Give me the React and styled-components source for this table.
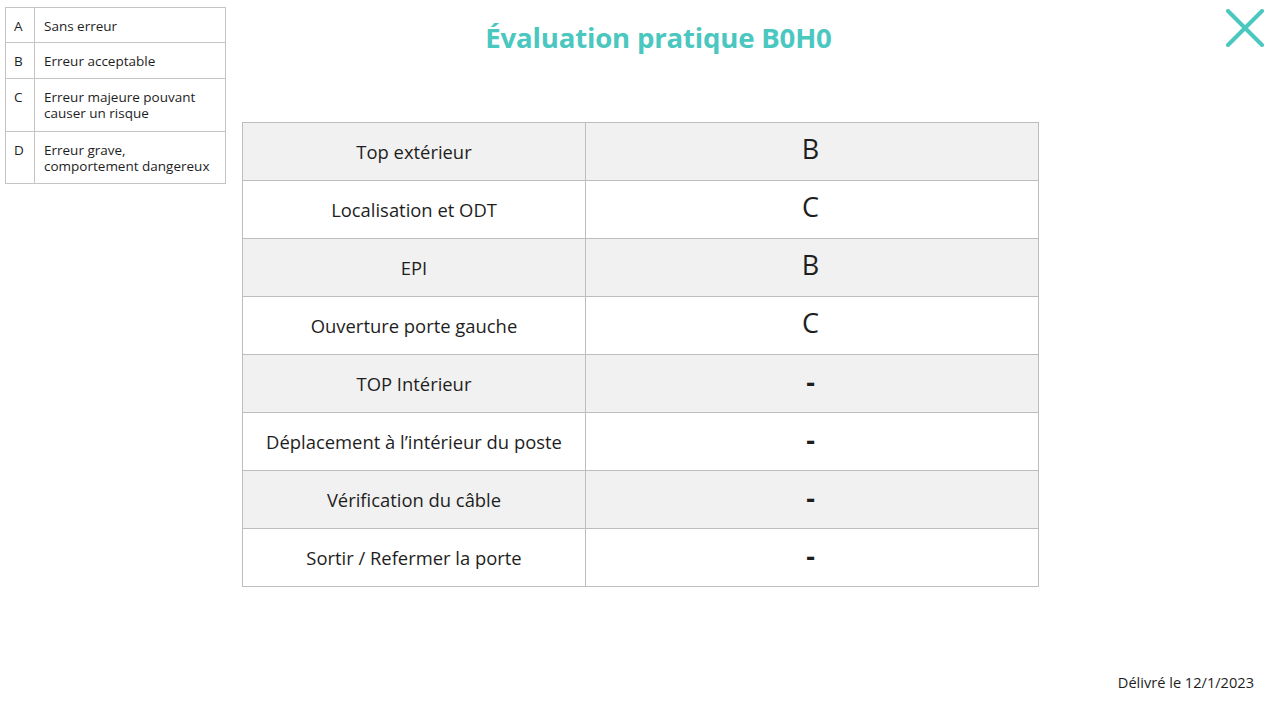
import React from "react";
import styled, { createGlobalStyle } from "styled-components";

const Global = createGlobalStyle`
  html, body { margin: 0; padding: 0; background: #fff; }
  body { font-family: "Open Sans", "Noto Sans", sans-serif; color: #1e1e1e; }
`;

const Page = styled.div`
  width: 1280px;
  height: 716px;
  display: grid;
  grid-template-columns: 242px 796px 1fr;
  grid-template-rows: 1fr auto;
  box-sizing: border-box;
`;

const LegendCol = styled.div`
  padding: 7px 0 0 5px;
`;

const Legend = styled.table`
  border-collapse: collapse;
  width: 221px;
  font-size: 13.5px;
  line-height: 16px;
  td {
    border: 1px solid #c4c4c4;
    vertical-align: top;
    padding: 10px 6px 0 9px;
  }
  td:first-child { width: 12px; padding-left: 8px; padding-right: 8px; }
`;

const LegendRow = styled.tr`
  height: ${(p) => p.$h}px;
`;

const Main = styled.main`
  display: flex;
  flex-direction: column;
  align-items: stretch;
`;

const Title = styled.h1`
  margin: 18px 0 0 37px;
  text-align: center;
  font-size: 27.6px;
  line-height: 38px;
  font-weight: 700;
  color: #4ac7bf;
  letter-spacing: -0.2px;
`;

const Grid = styled.table`
  margin-top: 66px;
  border-collapse: collapse;
  width: 797px;
  td {
    border: 1px solid #bdbdbd;
    text-align: center;
  }
`;

const Row = styled.tr`
  height: 58px;
  background: ${(p) => (p.$alt ? "#f1f1f1" : "#fff")};
`;

const Label = styled.td`
  width: 340px;
  font-size: 18.4px;
  padding-bottom: 2px;
`;

const Grade = styled.td`
  font-size: 27px;
  line-height: 30px;
  padding-bottom: ${(p) => (p.$dash ? 4 : 6)}px;
  padding-right: 4px;
  font-weight: ${(p) => (p.$dash ? 700 : 400)};
`;

const CloseCol = styled.div`
  display: flex;
  justify-content: flex-end;
  align-items: flex-start;
  padding: 9px 16px 0 0;
`;

const CloseBtn = styled.button`
  background: none;
  border: none;
  padding: 0;
  width: 38px;
  height: 38px;
  cursor: pointer;
  display: block;
`;

const Footer = styled.footer`
  grid-column: 1 / -1;
  text-align: right;
  padding: 0 26px 24px 0;
  font-size: 14.6px;
  line-height: 20px;
`;

const legend = [
  ["A", "Sans erreur", 35],
  ["B", "Erreur acceptable", 36],
  ["C", "Erreur majeure pouvant causer un risque", 53],
  ["D", "Erreur grave, comportement dangereux", 52],
];

const rows = [
  ["Top extérieur", "B"],
  ["Localisation et ODT", "C"],
  ["EPI", "B"],
  ["Ouverture porte gauche", "C"],
  ["TOP Intérieur", "-"],
  ["Déplacement à l’intérieur du poste", "-"],
  ["Vérification du câble", "-"],
  ["Sortir / Refermer la porte", "-"],
];

export default function App() {
  return (
    <>
      <Global />
      <Page>
        <LegendCol>
          <Legend>
            <tbody>
              {legend.map(([k, v, h]) => (
                <LegendRow key={k} $h={h}>
                  <td>{k}</td>
                  <td>{v}</td>
                </LegendRow>
              ))}
            </tbody>
          </Legend>
        </LegendCol>
        <Main>
          <Title>Évaluation pratique B0H0</Title>
          <Grid>
            <tbody>
              {rows.map(([l, g], i) => (
                <Row key={l} $alt={i % 2 === 0}>
                  <Label>{l}</Label>
                  <Grade $dash={g === "-"}>{g}</Grade>
                </Row>
              ))}
            </tbody>
          </Grid>
        </Main>
        <CloseCol>
          <CloseBtn aria-label="Fermer">
            <svg width="38" height="38" viewBox="0 0 38 38">
              <path d="M2 2 L36 36 M36 2 L2 36" stroke="#4ac7bf" strokeWidth="4" strokeLinecap="round" />
            </svg>
          </CloseBtn>
        </CloseCol>
        <Footer>Délivré le 12/1/2023</Footer>
      </Page>
    </>
  );
}
